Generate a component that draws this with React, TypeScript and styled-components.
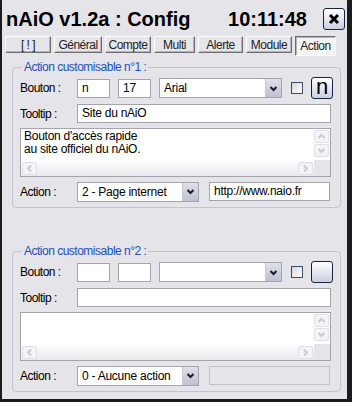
import React from 'react'
import styled, { createGlobalStyle } from 'styled-components'

const GlobalStyle = createGlobalStyle`
    html, body {
        margin: 0;
        padding: 0;
        background: #1b1b1b;
    }
    * {
        box-sizing: border-box;
    }
`

const tabs = [
    { label: '[ ! ]', width: 46 },
    { label: 'Général', width: 48 },
    { label: 'Compte', width: 46 },
    { label: 'Multi', width: 41 },
    { label: 'Alerte', width: 45 },
    { label: 'Module', width: 46 },
    { label: 'Action', width: 41, active: true },
]

type Action = {
    num: number,
    letter: string,
    size: string,
    font: string,
    tooltip: string,
    lines: string[],
    action: string,
    url: string,
    enabled: boolean,
}

const actions: Action[] = [
    {
        num: 1,
        letter: 'n',
        size: '17',
        font: 'Arial',
        tooltip: 'Site du nAiO',
        lines: ["Bouton d'accès rapide", 'au site officiel du nAiO.'],
        action: '2 - Page internet',
        url: 'http://www.naio.fr',
        enabled: true,
    },
    {
        num: 2,
        letter: '',
        size: '',
        font: '',
        tooltip: '',
        lines: [],
        action: '0 - Aucune action',
        url: '',
        enabled: false,
    },
]

const Chevron = ({ dir = 'down', color = '#1e1e2a' }: { dir?: 'up' | 'down' | 'left' | 'right', color?: string }) => {
    const rot = { down: 0, up: 180, left: 90, right: -90 }[dir]
    return (
        <svg width='9' height='9' viewBox='0 0 9 9' style={{ transform: `rotate(${rot}deg)` }}>
            <path d='M1.5 3 L4.5 6 L7.5 3' fill='none' stroke={color} strokeWidth='2' />
        </svg>
    )
}

const SelectBox = ({ value, width }: { value: string, width: number }) => (
    <Select style={{ width }}>
        <SelectText>{value}</SelectText>
        <DropButton><Chevron /></DropButton>
    </Select>
)

const ActionGroup = ({ data, gap }: { data: Action, gap: number }) => (
    <Group style={{ marginTop: gap }}>
        <Legend>Action customisable n°{data.num} :</Legend>
        <Row>
            <Label>Bouton :</Label>
            <Input width={33}>{data.letter}</Input>
            <Input width={33}>{data.size}</Input>
            <SelectBox value={data.font} width={123} />
            <CheckBox />
            <PreviewButton>{data.letter}</PreviewButton>
        </Row>
        <Row>
            <Label>Tooltip :</Label>
            <Input width={254}>{data.tooltip}</Input>
        </Row>
        <TextArea>
            <TextContent>
                {data.lines.map((line) => <div key={line}>{line}</div>)}
            </TextContent>
            <VScroll>
                <ArrowButton><Chevron dir='up' color='#c9c9d2' /></ArrowButton>
                <ArrowButton><Chevron dir='down' color='#c9c9d2' /></ArrowButton>
            </VScroll>
            <HScroll>
                <ArrowButton><Chevron dir='left' color='#c9c9d2' /></ArrowButton>
                <ArrowButton><Chevron dir='right' color='#c9c9d2' /></ArrowButton>
            </HScroll>
            <Corner />
        </TextArea>
        <Row>
            <Label>Action :</Label>
            <SelectBox value={data.action} width={122} />
            <Input width={121} disabled={!data.enabled} style={{ marginLeft: 2 }}>{data.url}</Input>
        </Row>
    </Group>
)

export default function App() {
    return (
        <Window>
            <GlobalStyle />
            <Header>
                <Title>nAiO v1.2a : Config</Title>
                <Clock>10:11:48</Clock>
                <CloseButton>
                    <svg width='12' height='12' viewBox='0 0 12 12'>
                        <path d='M2 2 L10 10 M10 2 L2 10' stroke='#000' strokeWidth='3' />
                    </svg>
                </CloseButton>
            </Header>
            <TabBar>
                {tabs.map((tab) => (
                    <Tab key={tab.label} width={tab.width} $active={!!tab.active}>{tab.label}</Tab>
                ))}
            </TabBar>
            <ActionGroup data={actions[0]} gap={3} />
            <ActionGroup data={actions[1]} gap={36} />
        </Window>
    )
}

const Window = styled.div`
    width: 352px;
    height: 402px;
    background: #e4e4e9;
    border-left: 2px solid #1b1b1b;
    border-right: 5px solid #1b1b1b;
    border-bottom: 3px solid #1b1b1b;
    font-family: "Liberation Sans", Arial, sans-serif;
    font-size: 12px;
    letter-spacing: -0.5px;
    color: #000;
    overflow: hidden;
`

const Header = styled.div`
    display: flex;
    align-items: center;
    height: 36px;
    padding: 2px 2px 0 4px;
    letter-spacing: 0;
`

const Title = styled.div`
    font-size: 20px;
    font-weight: bold;
`

const Clock = styled.div`
    margin-left: auto;
    font-size: 20px;
    font-weight: bold;
`

const CloseButton = styled.div`
    width: 22px;
    height: 22px;
    margin-left: 16px;
    border: 1px solid #18243e;
    border-radius: 3px;
    background: linear-gradient(#ffffff, #c9d0e2);
    display: flex;
    align-items: center;
    justify-content: center;
`

const TabBar = styled.div`
    display: flex;
    align-items: flex-start;
    gap: 3px;
    padding-left: 3px;
    height: 21px;
`

const Tab = styled.div<{ width: number, $active: boolean }>`
    width: ${(p) => p.width}px;
    height: ${(p) => (p.$active ? 20 : 17)}px;
    display: flex;
    align-items: ${(p) => (p.$active ? 'flex-end' : 'center')};
    justify-content: center;
    padding-bottom: ${(p) => (p.$active ? 2 : 0)}px;
    color: #222;
    white-space: nowrap;
    background: ${(p) => (p.$active ? '#f4f4f6' : '#e6e6ea')};
    border-style: solid;
    border-width: 1px;
    border-color: ${(p) => (p.$active ? '#6e6e74 #ffffff #ffffff #6e6e74' : '#ffffff #6e6e74 #6e6e74 #ffffff')};
    box-shadow: ${(p) => (p.$active ? 'inset 1px 1px 0 #b4b4ba' : 'inset -1px -1px 0 #b4b4ba')};
`

const Group = styled.fieldset`
    margin: 0 6px 0 10px;
    padding: 3px 0 5px 7px;
    border: 1px solid #c3c3ca;
    border-radius: 4px;
    display: flex;
    flex-direction: column;
    gap: 4px;
`

const Legend = styled.legend`
    padding: 0 2px;
    margin-left: 2px;
    color: #1f4fbe;
`

const Row = styled.div`
    display: flex;
    align-items: center;
    gap: 8px;
    min-height: 21px;
`

const Label = styled.div`
    width: 49px;
`

const Input = styled.div<{ width: number, disabled?: boolean }>`
    width: ${(p) => p.width}px;
    height: 19px;
    line-height: 17px;
    padding-left: 4px;
    letter-spacing: -0.25px;
    border: 1px solid ${(p) => (p.disabled ? '#c1c1c6' : '#a4a4ac')};
    background: ${(p) => (p.disabled ? '#e4e4e9' : '#ffffff')};
    white-space: nowrap;
    overflow: hidden;
`

const Select = styled.div`
    height: 20px;
    display: flex;
    border: 1px solid #a4a4ac;
    background: #ffffff;
    letter-spacing: -0.25px;
`

const SelectText = styled.div`
    flex: 1;
    line-height: 18px;
    padding-left: 4px;
    white-space: nowrap;
    overflow: hidden;
`

const DropButton = styled.div`
    width: 16px;
    display: flex;
    align-items: center;
    justify-content: center;
    background: linear-gradient(#dfe0ea, #bfc1d2);
    border-left: 1px solid #c9c9d4;
`

const CheckBox = styled.div`
    width: 12px;
    height: 12px;
    margin-left: 1px;
    border: 1px solid #3b4a66;
    background: linear-gradient(135deg, #d6d6da, #ffffff);
`

const PreviewButton = styled.div`
    width: 22px;
    height: 22px;
    border: 1px solid #18243e;
    border-radius: 3px;
    background: linear-gradient(#ffffff, #c9d0e2);
    display: flex;
    align-items: center;
    justify-content: center;
    font-size: 22px;
    letter-spacing: 0;
    line-height: 1;
    padding-bottom: 3px;
`

const TextArea = styled.div`
    width: 311px;
    height: 49px;
    border: 1px solid #a4a4ac;
    background: #ffffff;
    display: grid;
    grid-template-columns: 1fr 16px;
    grid-template-rows: 1fr 16px;
`

const TextContent = styled.div`
    padding: 1px 0 0 3px;
    letter-spacing: -0.25px;
    line-height: 13px;
`

const VScroll = styled.div`
    display: flex;
    flex-direction: column;
    gap: 1px;
    padding-top: 1px;
`

const HScroll = styled.div`
    display: flex;
    justify-content: space-between;
    align-items: center;
    padding: 0 1px;
    background: linear-gradient(#ffffff, #e9e9ef);
`

const ArrowButton = styled.div`
    width: 15px;
    height: 13px;
    display: flex;
    align-items: center;
    justify-content: center;
    border: 1px solid #e0e0e6;
    border-radius: 2px;
    background: #f4f4f7;
`

const Corner = styled.div`
    background: #e4e4e9;
`
